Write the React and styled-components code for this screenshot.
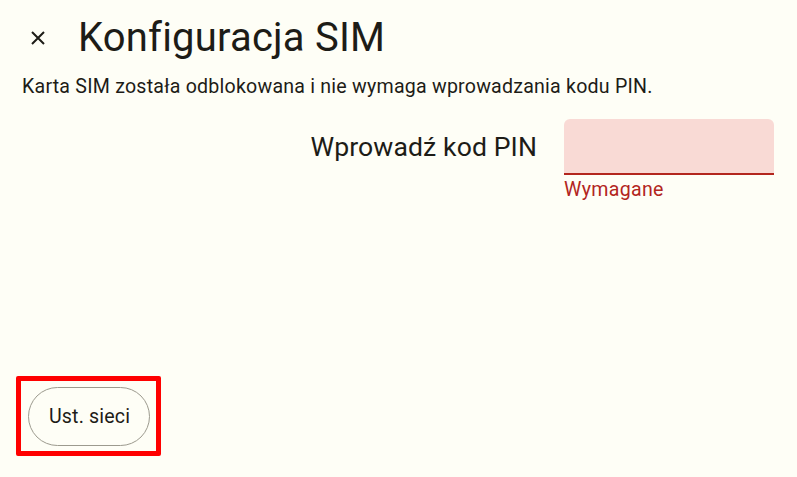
import React from 'react'
import styled, { createGlobalStyle } from 'styled-components'

const GlobalStyle = createGlobalStyle`
	html, body {
		margin: 0;
		padding: 0;
		background: #fefef6;
	}
	body {
		font-family: Roboto, 'Noto Sans', sans-serif;
		color: #1d1c17;
	}
`

const Page = styled.div`
	display: flex;
	flex-direction: column;
	width: 797px;
	height: 477px;
	box-sizing: border-box;
	padding: 14px 0 0 0;
	background: #fefef6;
`

const Header = styled.div`
	display: flex;
	align-items: center;
	gap: 24px;
	padding-left: 22px;
	height: 48px;
`

const CloseButton = styled.button`
	display: flex;
	align-items: center;
	justify-content: center;
	width: 32px;
	height: 32px;
	padding: 0;
	border: none;
	background: transparent;
	color: #1d1c17;
	cursor: pointer;
`

const Title = styled.h1`
	margin: 0;
	font-size: 40px;
	font-weight: 400;
	line-height: 48px;
	letter-spacing: 0.2px;
`

const Message = styled.p`
	margin: 13px 0 0 22px;
	font-size: 19.6px;
	line-height: 24px;
	letter-spacing: 0.22px;
`

const PinRow = styled.div`
	display: flex;
	justify-content: flex-end;
	gap: 27px;
	padding-right: 23px;
	margin-top: 20px;
`

const Label = styled.label`
	font-size: 26.6px;
	line-height: 56px;
	letter-spacing: 0.1px;
`

const Field = styled.div`
	display: flex;
	flex-direction: column;
	width: 210px;
`

const Input = styled.input`
	box-sizing: border-box;
	width: 100%;
	height: 56px;
	border: none;
	border-bottom: 2px solid #b3261e;
	border-radius: 6px 6px 0 0;
	background: #f9dad5;
	font-family: inherit;
	font-size: 18px;
	padding: 0 12px;
	outline: none;
`

const ErrorText = styled.span`
	margin-top: 4px;
	font-size: 19.6px;
	line-height: 22px;
	letter-spacing: 0.3px;
	color: #b3261e;
`

const Footer = styled.div`
	display: flex;
	margin-top: auto;
	padding: 0 0 21px 16px;
`

const Highlight = styled.div`
	display: flex;
	padding: 6px 6px 5px 7px;
	border: 5px solid #ff0000;
	border-radius: 2px;
`

const PillButton = styled.button`
	box-sizing: border-box;
	height: 59px;
	padding: 0 19px 0 20px;
	border: 1px solid #9c9a8e;
	border-radius: 30px;
	background: transparent;
	font-family: Roboto, sans-serif;
	font-size: 19.6px;
	letter-spacing: 0.15px;
	color: #1d1c17;
	cursor: pointer;
`

export default function App() {
	return (
		<>
			<GlobalStyle />
			<Page>
				<Header>
					<CloseButton aria-label="Zamknij">
						<svg width="16" height="16" viewBox="0 0 16 16">
							<path d="M2 2 L14 14 M14 2 L2 14" stroke="currentColor" strokeWidth="2" />
						</svg>
					</CloseButton>
					<Title>Konfiguracja SIM</Title>
				</Header>
				<Message>Karta SIM została odblokowana i nie wymaga wprowadzania kodu PIN.</Message>
				<PinRow>
					<Label htmlFor="pin">Wprowadź kod PIN</Label>
					<Field>
						<Input id="pin" type="password" />
						<ErrorText>Wymagane</ErrorText>
					</Field>
				</PinRow>
				<Footer>
					<Highlight>
						<PillButton>Ust. sieci</PillButton>
					</Highlight>
				</Footer>
			</Page>
		</>
	)
}
